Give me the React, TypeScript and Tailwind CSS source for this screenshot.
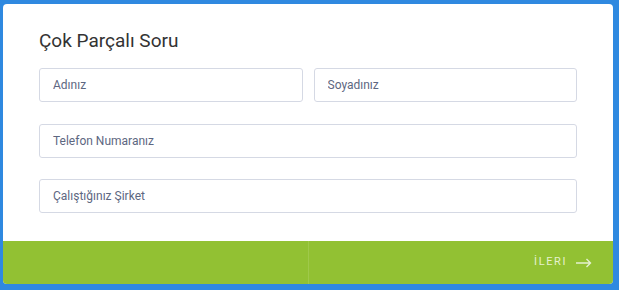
import React from "react";

export default function App() {
  const font = { fontFamily: "Roboto, 'Noto Sans', sans-serif" };
  const inputCls =
    "h-[34px] w-full rounded-[3px] border border-[#d5d9e4] bg-white px-[13px] text-[12px] text-[#5d6781] outline-none placeholder:text-[#5d6781]";
  return (
    <div className="h-[290px] w-[619px] bg-[#2f89e0] pl-[3px] pr-[6px] pt-[4px] pb-[6px]" style={font}>
      <div className="flex h-[280px] flex-col overflow-hidden rounded-[4px] bg-white">
        <div className="flex flex-1 flex-col px-[36px] pt-[25px]">
          <h1 className="text-[19px] leading-[24px] text-[#333]">Çok Parçalı Soru</h1>
          <div className="mt-[15px] grid grid-cols-2 gap-x-[11px]">
            <input className={inputCls} placeholder="Adınız" />
            <input className={inputCls} placeholder="Soyadınız" />
          </div>
          <input className={inputCls + " mt-[22px]"} placeholder="Telefon Numaranız" />
          <input className={inputCls + " mt-[21px]"} placeholder="Çalıştığınız Şirket" />
        </div>
        <div className="flex h-[43px] bg-[#92c133]">
          <div className="w-[306px] border-r border-[#9fc94a]" />
          <div className="flex flex-1 items-center justify-end pr-[21px]">
            <span className="text-[11px] tracking-[1.6px] text-[#e5f1cf]">İLERI</span>
            <svg className="ml-[9px]" width="16" height="10" viewBox="0 0 16 10" fill="none" stroke="#e5f1cf" strokeWidth="1.4">
              <path d="M0 5h14.5M10.5 1l4 4-4 4" />
            </svg>
          </div>
        </div>
      </div>
    </div>
  );
}
